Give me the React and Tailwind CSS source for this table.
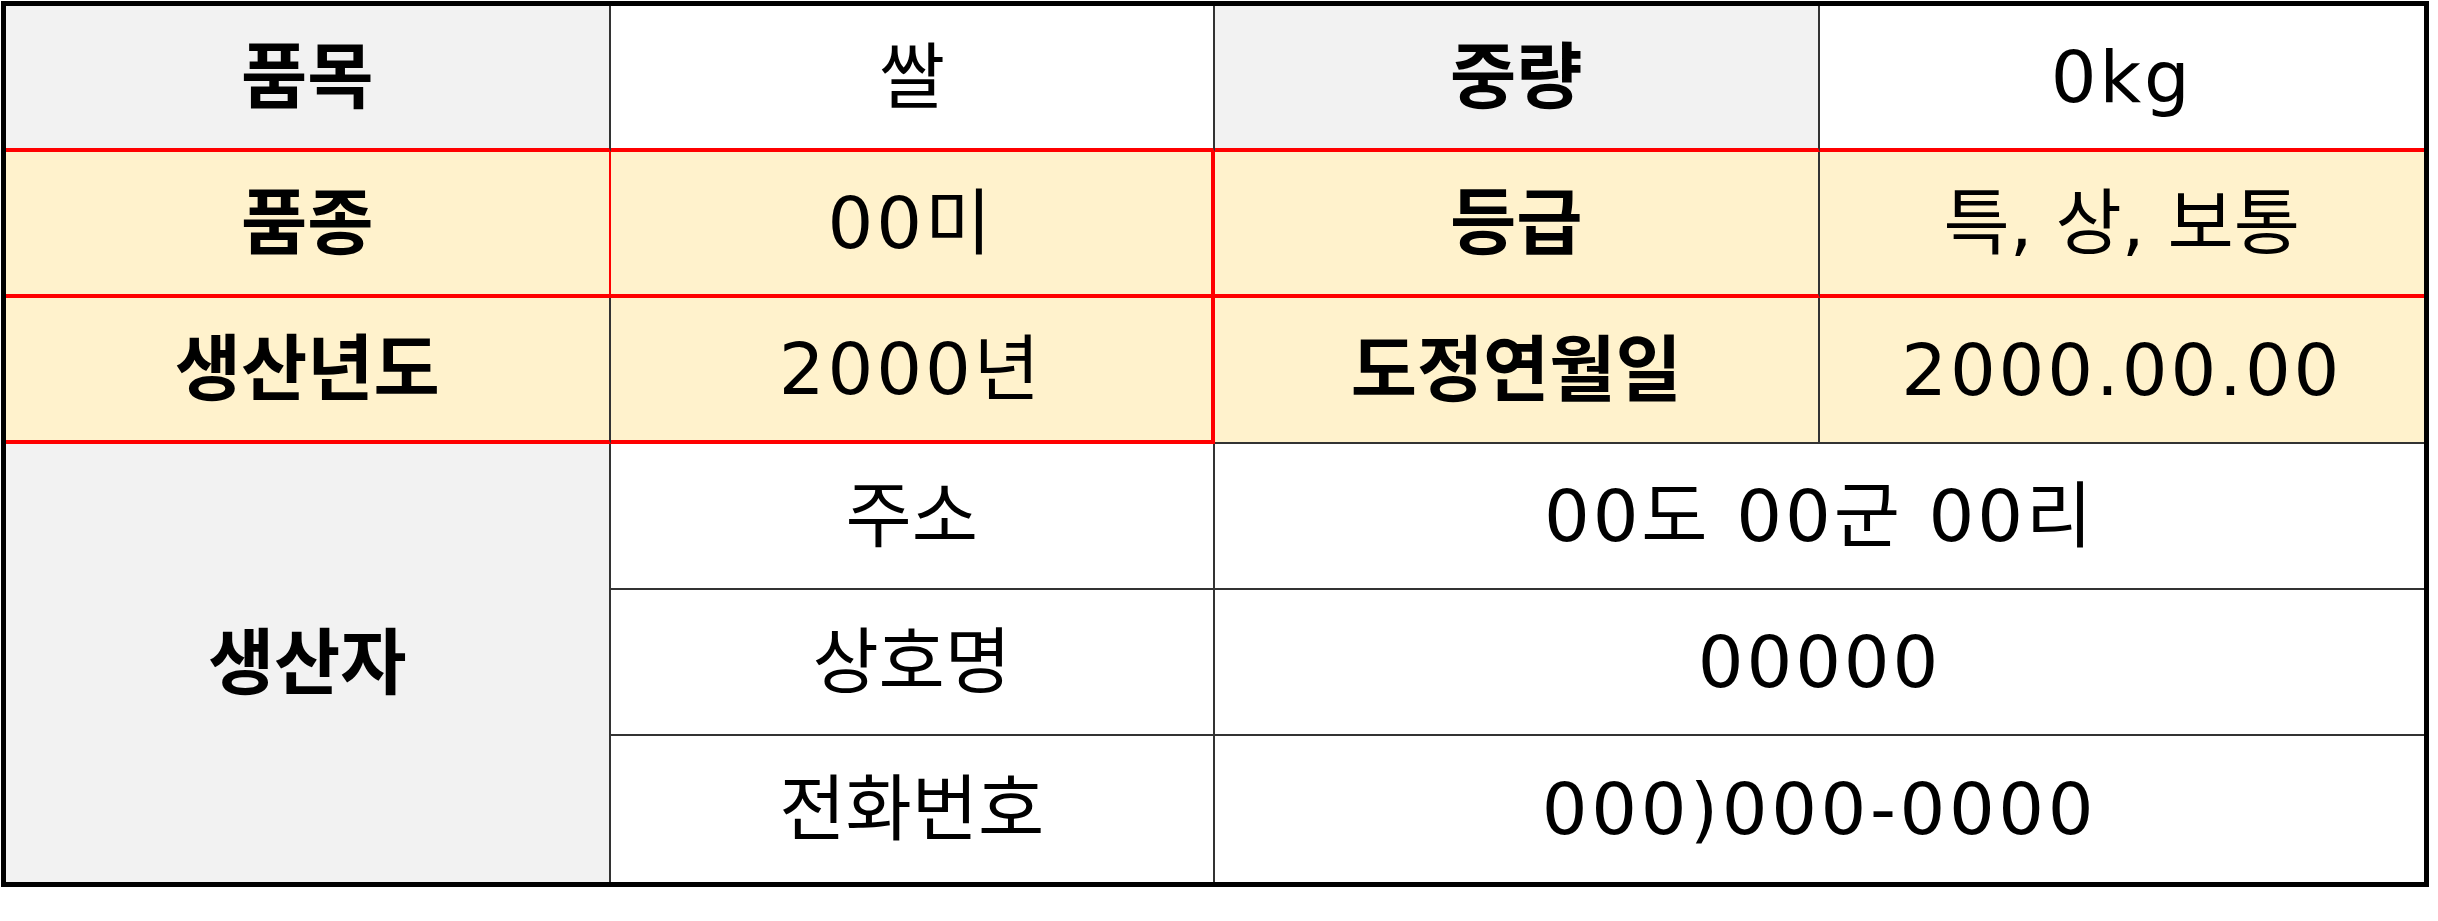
export default function App() {
    const cell = "flex items-center justify-center leading-none text-[72px] text-black"
    const line = "border-[#333]"

    return (
        <div className="w-[2438px] h-[921px] bg-white pt-[1px] pl-[1px]">
            <div className="w-[2428px] grid grid-cols-4 grid-rows-[repeat(6,146px)] border-[5px] border-black font-['DejaVu_Sans','Noto_Sans_CJK_KR',sans-serif]">
                {/* 1행 */}
                <div className={`${cell} font-bold bg-[#f2f2f2] border-r-2 ${line} border-b-4 border-b-[#ff0000]`}>품목</div>
                <div className={`${cell} bg-white border-r-2 ${line} border-b-4 border-b-[#ff0000]`}>쌀</div>
                <div className={`${cell} font-bold bg-[#f2f2f2] border-r-2 ${line} border-b-4 border-b-[#ff0000]`}>중량</div>
                <div className={`${cell} bg-white tracking-[0.04em] border-b-4 border-b-[#ff0000]`}>0kg</div>

                {/* 2행 */}
                <div className={`${cell} font-bold bg-[#fff2cc] border-r-2 border-r-[#ff0000] border-b-4 border-b-[#ff0000]`}>품종</div>
                <div className={`${cell} bg-[#fff2cc] tracking-[0.04em] border-r-4 border-r-[#ff0000] border-b-4 border-b-[#ff0000]`}>00미</div>
                <div className={`${cell} font-bold bg-[#fff2cc] border-r-2 ${line} border-b-4 border-b-[#ff0000]`}>등급</div>
                <div className={`${cell} bg-[#fff2cc] border-b-4 border-b-[#ff0000]`}>특, 상, 보통</div>

                {/* 3행 */}
                <div className={`${cell} font-bold bg-[#fff2cc] border-r-2 ${line} border-b-4 border-b-[#ff0000]`}>생산년도</div>
                <div className={`${cell} bg-[#fff2cc] tracking-[0.04em] border-r-4 border-r-[#ff0000] border-b-4 border-b-[#ff0000]`}>2000년</div>
                <div className={`${cell} font-bold bg-[#fff2cc] border-r-2 ${line} border-b-2`}>도정연월일</div>
                <div className={`${cell} bg-[#fff2cc] tracking-[0.04em] border-b-2 ${line}`}>2000.00.00</div>

                {/* 생산자 */}
                <div className={`${cell} row-span-3 font-bold bg-[#f2f2f2] border-r-2 ${line}`}>생산자</div>
                <div className={`${cell} bg-white border-r-2 border-b-2 ${line}`}>주소</div>
                <div className={`${cell} col-span-2 bg-white tracking-[0.04em] border-b-2 ${line}`}>00도 00군 00리</div>
                <div className={`${cell} bg-white border-r-2 border-b-2 ${line}`}>상호명</div>
                <div className={`${cell} col-span-2 bg-white tracking-[0.04em] border-b-2 ${line}`}>00000</div>
                <div className={`${cell} bg-white border-r-2 ${line}`}>전화번호</div>
                <div className={`${cell} col-span-2 bg-white tracking-[0.05em]`}>000)000-0000</div>
            </div>
        </div>
    )
}
